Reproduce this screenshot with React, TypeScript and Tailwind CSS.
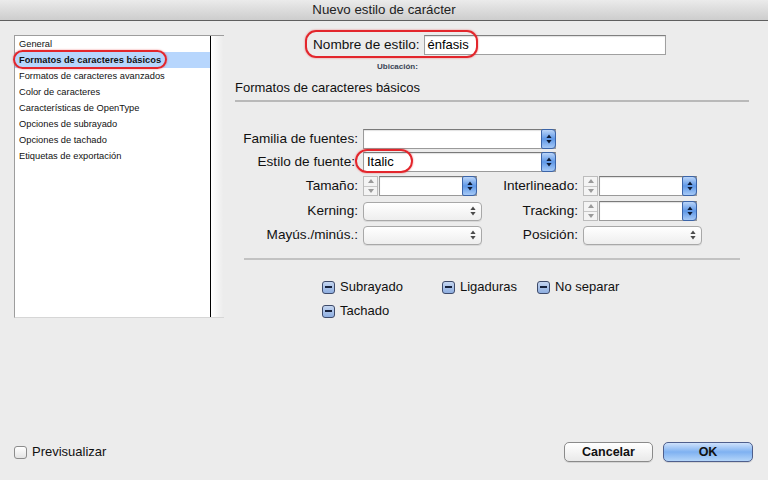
import React from "react";

const font = { fontFamily: '"Liberation Sans", Arial, sans-serif' };

const categories = [
  "General",
  "Formatos de caracteres básicos",
  "Formatos de caracteres avanzados",
  "Color de caracteres",
  "Características de OpenType",
  "Opciones de subrayado",
  "Opciones de tachado",
  "Etiquetas de exportación",
];

const UpDown = ({ color = "#111" }: { color?: string }) => (
  <svg width="6" height="10" viewBox="0 0 6 10">
    <path d="M3 0.5 L5.6 4 H0.4 Z" fill={color} />
    <path d="M3 9.5 L5.6 6 H0.4 Z" fill={color} />
  </svg>
);

const BlueStepper = () => (
  <div className="absolute -right-px -top-px -bottom-px w-[15px] flex items-center justify-center rounded-r-[4px] rounded-l-[2px] border border-[#3b64a8] bg-gradient-to-b from-[#b9d4f8] via-[#5e97e6] to-[#a6c9f6]">
    <UpDown color="#0d1a33" />
  </div>
);

const Combo = ({ width, value }: { width: string; value?: string }) => (
  <div className={`relative h-[20px] ${width} border border-[#9a9a9a] border-t-[#7a7a7a] bg-white shadow-[inset_0_1px_1px_rgba(0,0,0,0.12)]`}>
    <span className="block pl-[3px] text-[13px] leading-[18px] text-black">{value}</span>
    <BlueStepper />
  </div>
);

const GreyStepper = () => (
  <div className="flex h-[20px] w-[15px] flex-col border border-[#bcbcbc] bg-[#f4f4f4]">
    <div className="flex flex-1 items-center justify-center border-b border-[#c8c8c8]">
      <svg width="6" height="4" viewBox="0 0 6 4">
        <path d="M3 0 L6 4 H0 Z" fill="#9a9a9a" />
      </svg>
    </div>
    <div className="flex flex-1 items-center justify-center">
      <svg width="6" height="4" viewBox="0 0 6 4">
        <path d="M3 4 L6 0 H0 Z" fill="#9a9a9a" />
      </svg>
    </div>
  </div>
);

const SpinField = () => (
  <div className="flex items-center">
    <GreyStepper />
    <div className="ml-px">
      <Combo width="w-[98px]" />
    </div>
  </div>
);

const Popup = () => (
  <div className="flex h-[19px] w-[119px] items-center justify-end rounded-[4px] border border-[#a8a8a8] bg-gradient-to-b from-white to-[#eeeeee] pr-[5px] shadow-[0_1px_0_rgba(0,0,0,0.08)]">
    <UpDown color="#4a4a4a" />
  </div>
);

const Mixed = ({ label }: { label: string }) => (
  <div className="flex items-center gap-[5px]">
    <div className="flex h-[13px] w-[13px] items-center justify-center rounded-[3px] border border-[#3d4a6a] bg-gradient-to-b from-[#c5d6f0] to-[#8eaee0]">
      <div className="h-[2px] w-[7px] bg-[#17223c]" />
    </div>
    <span className="text-[13px] text-[#111]">{label}</span>
  </div>
);

const Label = ({ text, w, pad = "pr-[5px]" }: { text: string; w: string; pad?: string }) => (
  <div className={`${w} ${pad} shrink-0 whitespace-nowrap text-right text-[13.6px] text-[#111]`}>{text}</div>
);

export default function App() {
  return (
    <div className="flex h-[480px] w-[768px] flex-col overflow-hidden bg-[#ececec]" style={font}>
      {/* title bar */}
      <div className="flex h-[21px] shrink-0 items-center justify-center border-b border-[#5f5f5f] bg-gradient-to-b from-[#ebebeb] to-[#cdcdcd]">
        <span className="text-[13.3px] text-[#222]">Nuevo estilo de carácter</span>
      </div>

      <div className="flex flex-1 pl-[14px] pt-[14px]">
        {/* category list */}
        <div className="flex h-[283px] w-[210px] shrink-0 border-l border-t border-[#9d9d9d] border-b-[#d6d6d6] border-b">
          <div className="w-[196px] border-r border-black bg-white">
            {categories.map((c, i) => (
              <div
                key={c}
                className={`relative h-[16px] pl-[4px] text-[9.3px] leading-[16px] text-[#111] ${i === 1 ? "bg-[#b7d6fd] font-bold" : ""}`}
              >
                {c}
                {i === 1 && (
                  <div className="absolute -left-[2px] -top-[2px] h-[19px] w-[154px] rounded-full border-2 border-[#e3262c] shadow-[0_0_2px_rgba(227,38,44,0.6)]" />
                )}
              </div>
            ))}
          </div>
          <div className="w-[13px] bg-gradient-to-r from-white to-[#ebebeb]" />
        </div>

        {/* right side */}
        <div className="ml-[11px] flex w-[514px] flex-col">
          <div className="flex h-[20px] items-center pl-[78px]">
            <div className="relative flex items-center">
              <span className="whitespace-nowrap pr-[4px] text-[13.6px] text-[#111]">Nombre de estilo:</span>
              <div className="h-[20px] w-[242px] border border-[#a0a0a0] border-t-[#808080] bg-white pl-[3px] text-[13px] leading-[18px] shadow-[inset_0_1px_1px_rgba(0,0,0,0.12)]">
                énfasis
              </div>
              <div className="absolute -left-[8px] -top-[5px] h-[28px] w-[173px] rounded-[11px] border-2 border-[#e3262c] shadow-[0_0_2px_rgba(227,38,44,0.6)]" />
            </div>
          </div>

          <div className="mt-[7px] pl-[142px] text-[8px] font-semibold leading-[10px] text-[#3a4556]">Ubicación:</div>

          <div className="mt-[8px] text-[13px] leading-[15px] text-[#111]">Formatos de caracteres básicos</div>
          <div className="mt-[5px] h-[2px] w-[514px] bg-[#b9b9b9]" />

          {/* form */}
          <div className="mt-[27px] flex flex-col">
            <div className="flex h-[20px] items-center">
              <Label text="Familia de fuentes:" w="w-[128px]" />
              <Combo width="w-[193px]" />
            </div>
            <div className="mt-[3px] flex h-[20px] items-center">
              <Label text="Estilo de fuente:" w="w-[128px]" pad="pr-[8px]" />
              <div className="relative">
                <Combo width="w-[193px]" value="Italic" />
                <div className="absolute -left-[8px] -top-[3px] h-[24px] w-[58px] rounded-[12px] border-2 border-[#e3262c] shadow-[0_0_2px_rgba(227,38,44,0.6)]" />
              </div>
            </div>
            <div className="mt-[4px] flex h-[20px] items-center">
              <Label text="Tamaño:" w="w-[128px]" />
              <div className="w-[119px]">
                <SpinField />
              </div>
              <Label text="Interlineado:" w="w-[101px]" />
              <SpinField />
            </div>
            <div className="mt-[5px] flex h-[20px] items-center">
              <Label text="Kerning:" w="w-[128px]" />
              <Popup />
              <Label text="Tracking:" w="w-[101px]" />
              <SpinField />
            </div>
            <div className="mt-[4px] flex h-[20px] items-center">
              <Label text="Mayús./minús.:" w="w-[128px]" />
              <Popup />
              <Label text="Posición:" w="w-[101px]" />
              <Popup />
            </div>
          </div>

          <div className="ml-[9px] mt-[13px] h-[2px] w-[496px] bg-[#c2c2c2]" />

          <div className="mt-[20px] flex flex-col pl-[87px]">
            <div className="flex h-[14px] items-center">
              <div className="w-[120px]">
                <Mixed label="Subrayado" />
              </div>
              <div className="w-[95px]">
                <Mixed label="Ligaduras" />
              </div>
              <Mixed label="No separar" />
            </div>
            <div className="mt-[10px] flex h-[14px] items-center">
              <Mixed label="Tachado" />
            </div>
          </div>
        </div>
      </div>

      {/* footer */}
      <div className="flex h-[38px] shrink-0 items-start justify-between pl-[14px] pr-[15px]">
        <div className="flex h-[20px] items-center gap-[5px]">
          <div className="h-[13px] w-[13px] rounded-[3px] border border-[#8c8c8c] bg-gradient-to-b from-white to-[#e4e4e4]" />
          <span className="text-[13px] text-[#111]">Previsualizar</span>
        </div>
        <div className="flex gap-[10px]">
          <button className="h-[20px] w-[89px] rounded-[5px] border border-[#8a8a8a] bg-gradient-to-b from-white to-[#e9e9e9] text-[12.5px] font-bold text-[#111] shadow-[0_1px_0_rgba(0,0,0,0.1)]">
            Cancelar
          </button>
          <button className="h-[20px] w-[90px] rounded-[5px] border border-[#4f5f8c] bg-gradient-to-b from-[#cfe2fb] via-[#7fb1f1] to-[#b4d5f9] text-[12.5px] font-bold text-[#111] shadow-[0_1px_0_rgba(0,0,0,0.1)]">
            OK
          </button>
        </div>
      </div>
    </div>
  );
}
